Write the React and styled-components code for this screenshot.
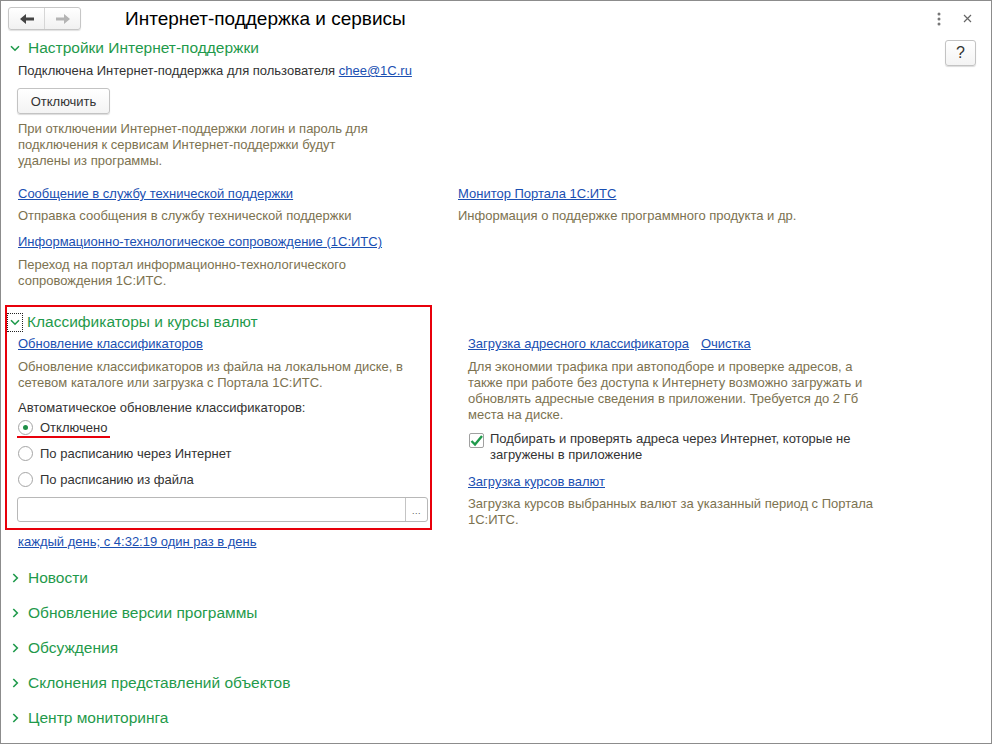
import React from "react";
import styled, { createGlobalStyle } from "styled-components";

const GlobalStyle = createGlobalStyle`
  html, body {
    margin: 0;
    padding: 0;
    background: #fff;
  }
  * {
    box-sizing: border-box;
  }
`;

const Window = styled.div`
  width: 992px;
  height: 744px;
  border: 1px solid #8c8c8c;
  background: #fff;
  font-family: "Liberation Sans", Arial, sans-serif;
  font-size: 13px;
  color: #333;
  display: flex;
  flex-direction: column;
  overflow: hidden;
`;

const TitleBar = styled.div`
  height: 37px;
  display: flex;
  align-items: center;
  padding: 0 0 0 7px;
`;

const NavGroup = styled.div`
  display: flex;
  width: 73px;
  height: 23px;
  margin-top: -2px;
  border: 1px solid #c6c6c6;
  border-radius: 3px;
  background: linear-gradient(#ffffff, #f1f1f1);
  box-shadow: 0 1px 1px rgba(0, 0, 0, 0.12);
`;

const NavButton = styled.div`
  flex: 1;
  display: flex;
  align-items: center;
  justify-content: center;
  & + & {
    border-left: 1px solid #d6d6d6;
  }
`;

const Title = styled.div`
  margin-left: 44px;
  font-size: 19px;
  color: #000;
  margin-top: -2px;
`;

const WindowTools = styled.div`
  margin-left: auto;
  display: flex;
  align-items: center;
  gap: 22px;
  margin-right: 19px;
  margin-top: -2px;
`;

const Body = styled.div`
  flex: 1;
  display: flex;
`;

const Main = styled.div`
  flex: 1;
  display: flex;
  flex-direction: column;
`;

const Aside = styled.div`
  width: 46px;
  padding-top: 2px;
`;

const PlainButton = styled.div`
  display: flex;
  align-items: center;
  justify-content: center;
  width: ${(p) => p.$w}px;
  height: 26px;
  margin-left: ${(p) => p.$ml || 0}px;
  border: 1px solid #c3c3c3;
  border-radius: 3px;
  background: linear-gradient(#ffffff, #f3f3f3);
  box-shadow: 0 1px 1px rgba(0, 0, 0, 0.14);
  color: #333;
  font-size: ${(p) => p.$fs || 13}px;
`;

const GroupHeader = styled.div`
  display: flex;
  align-items: center;
  height: 20px;
  font-size: 15.5px;
  color: #1f9a4b;
`;

const Chevron = styled.span`
  width: ${(p) => p.$w}px;
  height: 19px;
  padding-left: ${(p) => p.$pl || 0}px;
  margin-right: ${(p) => p.$gap || 0}px;
  display: flex;
  align-items: center;
  justify-content: ${(p) => (p.$focused ? "center" : "flex-start")};
  outline: ${(p) => (p.$focused ? "1px dotted #222" : "none")};
  outline-offset: -1px;
`;

const SectionOne = styled.div`
  padding-left: 8px;
`;

const Indented = styled.div`
  padding-left: 9px;
`;

const Line = styled.div`
  line-height: 16px;
  margin-top: ${(p) => p.$mt || 0}px;
  color: #333;
`;

const Note = styled.div`
  line-height: 16px;
  color: #7c7250;
  margin-top: ${(p) => p.$mt || 0}px;
  max-width: ${(p) => p.$w || 440}px;
`;

const Link = styled.a`
  color: #1a4fb2;
  text-decoration: underline;
  line-height: 16px;
  cursor: pointer;
  white-space: nowrap;
`;

const LinkLine = styled.div`
  line-height: 16px;
  margin-top: ${(p) => p.$mt || 0}px;
  display: flex;
  gap: 12px;
`;

const TwoCols = styled.div`
  display: flex;
  margin-top: ${(p) => p.$mt || 0}px;
`;

const Col = styled.div`
  width: ${(p) => p.$w}px;
  padding-top: ${(p) => p.$pt || 0}px;
  margin-left: ${(p) => p.$ml || 0}px;
`;

const SectionTwo = styled.div`
  display: flex;
  margin-top: 16px;
  padding-left: 4px;
`;

const Highlight = styled.div`
  width: 427px;
  border: 2px solid #e8000b;
  padding: 5px 0 6px 0;
`;

const HighlightBody = styled.div`
  padding-left: 11px;
`;

const Radios = styled.div`
  display: flex;
  flex-direction: column;
  gap: 4px;
`;

const RadioRow = styled.div`
  display: flex;
  align-items: center;
  height: 22px;
  width: fit-content;
  margin-left: -1px;
  padding: 0 3px 0 1px;
  border-bottom: 2px solid ${(p) => (p.$marked ? "#e8000b" : "transparent")};
`;

const RadioCircle = styled.span`
  width: 15px;
  height: 15px;
  border-radius: 50%;
  border: 1px solid #a5a5a5;
  background: #fff;
  display: flex;
  align-items: center;
  justify-content: center;
  margin-right: 7px;
  margin-top: 2px;
  &::after {
    content: "";
    width: 5px;
    height: 5px;
    border-radius: 50%;
    background: ${(p) => (p.$checked ? "#1f8f47" : "transparent")};
  }
`;

const RadioLabel = styled.span`
  margin-top: 2px;
`;

const InputField = styled.div`
  display: flex;
  height: 25px;
  width: 411px;
  margin: 7px 0 0 -1px;
  border: 1px solid #b8b8b8;
  border-radius: 3px;
  background: #fff;
`;

const InputText = styled.div`
  flex: 1;
`;

const InputButton = styled.div`
  width: 22px;
  border-left: 1px solid #c4c4c4;
  display: flex;
  align-items: flex-end;
  justify-content: center;
  padding-bottom: 5px;
  color: #555;
  font-size: 9px;
  letter-spacing: 0.5px;
`;

const Schedule = styled.div`
  padding-left: 13px;
  margin-top: 4px;
  line-height: 16px;
`;

const CheckRow = styled.div`
  display: flex;
  margin-top: 8px;
`;

const CheckBox = styled.span`
  width: 15px;
  height: 15px;
  flex: none;
  border: 1px solid #a0a0a0;
  border-radius: 2px;
  background: #fff;
  margin: 2px 6px 0 1px;
  display: flex;
  align-items: center;
  justify-content: center;
`;

const CollapsedList = styled.div`
  display: flex;
  flex-direction: column;
  gap: 15px;
  margin-top: 18px;
  padding-left: 8px;
`;

const DownChevron = () => (
  <svg width="10" height="7" viewBox="0 0 10 7">
    <path d="M1 1.2 L5 5.2 L9 1.2" fill="none" stroke="#1f9a4b" strokeWidth="1.6" />
  </svg>
);

const RightChevron = () => (
  <svg width="7" height="10" viewBox="0 0 7 10">
    <path d="M1.3 1 L5.3 5 L1.3 9" fill="none" stroke="#1f9a4b" strokeWidth="1.6" />
  </svg>
);

const Arrow = ({ dir, color }) => (
  <svg width="14" height="10" viewBox="0 0 14 10">
    {dir === "left" ? (
      <path d="M0 5 L6 0 L6 3.5 L14 3.5 L14 6.5 L6 6.5 L6 10 Z" fill={color} />
    ) : (
      <path d="M14 5 L8 0 L8 3.5 L0 3.5 L0 6.5 L8 6.5 L8 10 Z" fill={color} />
    )}
  </svg>
);

const Kebab = () => (
  <svg width="4" height="14" viewBox="0 0 4 14">
    <circle cx="2" cy="2" r="1.5" fill="#777" />
    <circle cx="2" cy="7" r="1.5" fill="#777" />
    <circle cx="2" cy="12" r="1.5" fill="#777" />
  </svg>
);

const CloseIcon = () => (
  <svg width="9" height="9" viewBox="0 0 9 9">
    <path d="M1 1 L8 8 M8 1 L1 8" stroke="#666" strokeWidth="1.2" />
  </svg>
);

const CheckMark = () => (
  <svg width="13" height="12" viewBox="0 0 13 12">
    <path d="M1.5 6 L5 9.5 L12 1" fill="none" stroke="#1f9a4b" strokeWidth="2.4" />
  </svg>
);

const collapsed = [
  "Новости",
  "Обновление версии программы",
  "Обсуждения",
  "Склонения представлений объектов",
  "Центр мониторинга",
];

const radios = [
  { label: "Отключено", checked: true },
  { label: "По расписанию через Интернет" },
  { label: "По расписанию из файла" },
];

export default function App() {
  return (
    <>
      <GlobalStyle />
      <Window>
        <TitleBar>
          <NavGroup>
            <NavButton>
              <Arrow dir="left" color="#444" />
            </NavButton>
            <NavButton>
              <Arrow dir="right" color="#b4b4b4" />
            </NavButton>
          </NavGroup>
          <Title>Интернет-поддержка и сервисы</Title>
          <WindowTools>
            <Kebab />
            <CloseIcon />
          </WindowTools>
        </TitleBar>
        <Body>
          <Main>
            <SectionOne>
              <GroupHeader>
                <Chevron $w={19} $pl={1}>
                  <DownChevron />
                </Chevron>
                Настройки Интернет-поддержки
              </GroupHeader>
              <Indented>
                <Line $mt={5}>
                  Подключена Интернет-поддержка для пользователя <Link>chee@1C.ru</Link>
                </Line>
                <div style={{ marginTop: 9 }}>
                  <PlainButton $w={93} $ml={-1}>
                    Отключить
                  </PlainButton>
                </div>
                <Note $mt={7} $w={360}>
                  При отключении Интернет-поддержки логин и пароль для подключения к
                  сервисам Интернет-поддержки будут удалены из программы.
                </Note>
                <TwoCols $mt={17}>
                  <Col $w={440}>
                    <LinkLine>
                      <Link>Сообщение в службу технической поддержки</Link>
                    </LinkLine>
                    <Note $mt={6}>Отправка сообщения в службу технической поддержки</Note>
                    <LinkLine $mt={10}>
                      <Link>Информационно-технологическое сопровождение (1С:ИТС)</Link>
                    </LinkLine>
                    <Note $mt={7} $w={345}>
                      Переход на портал информационно-технологического сопровождения 1С:ИТС.
                    </Note>
                  </Col>
                  <Col $w={420}>
                    <LinkLine>
                      <Link>Монитор Портала 1С:ИТС</Link>
                    </LinkLine>
                    <Note $mt={6}>Информация о поддержке программного продукта и др.</Note>
                  </Col>
                </TwoCols>
              </Indented>
            </SectionOne>

            <SectionTwo>
              <div>
                <Highlight>
                  <GroupHeader>
                    <Chevron $w={16} $gap={4} $focused>
                      <DownChevron />
                    </Chevron>
                    Классификаторы и курсы валют
                  </GroupHeader>
                  <HighlightBody>
                    <LinkLine $mt={4}>
                      <Link>Обновление классификаторов</Link>
                    </LinkLine>
                    <Note $mt={7} $w={390}>
                      Обновление классификаторов из файла на локальном диске, в сетевом
                      каталоге или загрузка с Портала 1С:ИТС.
                    </Note>
                    <Line $mt={9}>Автоматическое обновление классификаторов:</Line>
                    <Radios>
                      {radios.map((r) => (
                        <RadioRow key={r.label} $marked={r.checked}>
                          <RadioCircle $checked={r.checked} />
                          <RadioLabel>{r.label}</RadioLabel>
                        </RadioRow>
                      ))}
                    </Radios>
                    <InputField>
                      <InputText />
                      <InputButton>...</InputButton>
                    </InputField>
                  </HighlightBody>
                </Highlight>
                <Schedule>
                  <Link>каждый день; с 4:32:19 один раз в день</Link>
                </Schedule>
              </div>
              <Col $w={420} $pt={31} $ml={36}>
                <LinkLine>
                  <Link>Загрузка адресного классификатора</Link>
                  <Link>Очистка</Link>
                </LinkLine>
                <Note $mt={7} $w={405}>
                  Для экономии трафика при автоподборе и проверке адресов, а также при
                  работе без доступа к Интернету возможно загружать и обновлять адресные
                  сведения в приложении. Требуется до 2 Гб места на диске.
                </Note>
                <CheckRow>
                  <CheckBox>
                    <CheckMark />
                  </CheckBox>
                  <Line>
                    Подбирать и проверять адреса через Интернет, которые не
                    <br />
                    загружены в приложение
                  </Line>
                </CheckRow>
                <LinkLine $mt={11}>
                  <Link>Загрузка курсов валют</Link>
                </LinkLine>
                <Note $mt={6} $w={410}>
                  Загрузка курсов выбранных валют за указанный период с Портала 1С:ИТС.
                </Note>
              </Col>
            </SectionTwo>

            <CollapsedList>
              {collapsed.map((t) => (
                <GroupHeader key={t}>
                  <Chevron $w={19} $pl={3}>
                    <RightChevron />
                  </Chevron>
                  {t}
                </GroupHeader>
              ))}
            </CollapsedList>
          </Main>
          <Aside>
            <PlainButton $w={31} $fs={16}>
              ?
            </PlainButton>
          </Aside>
        </Body>
      </Window>
    </>
  );
}
